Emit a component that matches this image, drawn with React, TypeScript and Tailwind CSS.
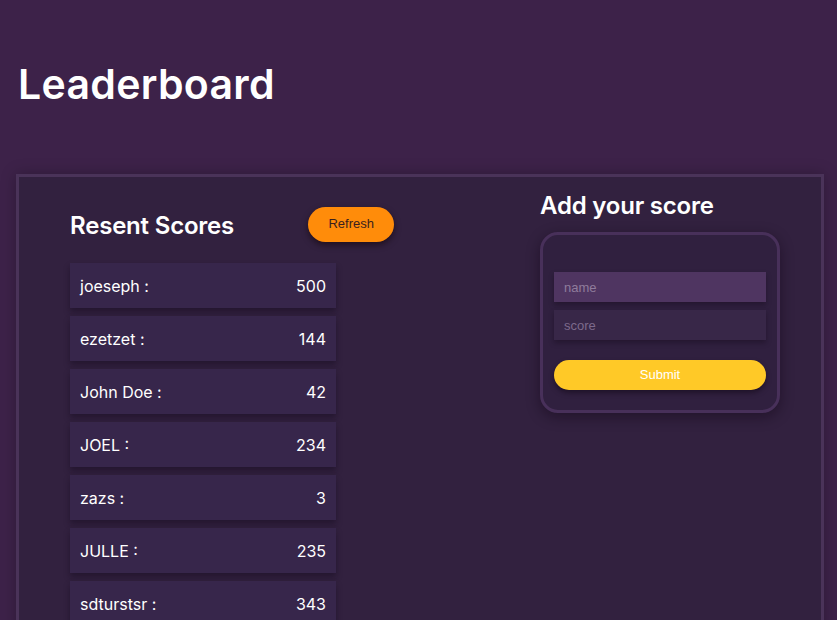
import React from "react";

const SCORES = [
  { name: "joeseph", score: 500 },
  { name: "ezetzet", score: 144 },
  { name: "John Doe", score: 42 },
  { name: "JOEL", score: 234 },
  { name: "zazs", score: 3 },
  { name: "JULLE", score: 235 },
  { name: "sdturstsr", score: 343 },
  { name: "abc", score: 12 },
];

const poppins = { fontFamily: "Inter, 'Noto Sans', sans-serif" };
const arial = { fontFamily: "'Liberation Sans', Arial, sans-serif" };

export default function App() {
  return (
    <div className="min-h-screen bg-[#3d2249] overflow-hidden" style={poppins}>
      <header className="px-[18px] pt-[58px] pb-[64px]">
        <h1 className="text-[41px] leading-[52px] font-semibold text-white tracking-[0.3px]">Leaderboard</h1>
      </header>

      <main className="ml-4 mr-[13px] border-[3px] border-[#4a3359] bg-[#32213f] shadow-[0_0_14px_rgba(0,0,0,0.25)] flex pl-[51px] pr-[41px] pt-[27px] pb-10">
        {/* Recent scores */}
        <section className="w-[324px]">
          <div className="flex items-center justify-between mb-[19px]">
            <h2 className="text-[24px] font-semibold text-white tracking-[-0.2px] mt-1">Resent Scores</h2>
            <button
              className="bg-[#ff8c0a] text-[#3a1f1f] text-[13px] px-[20px] h-[35px] rounded-full shadow-[0_3px_6px_rgba(20,5,10,0.6)]"
              style={arial}
            >
              Refresh
            </button>
          </div>
          <ul className="w-[266px] flex flex-col gap-2">
            {SCORES.map((s) => (
              <li
                key={s.name}
                className="h-[45px] bg-[#37264b] flex items-center justify-between px-[10px] text-white text-[16px] shadow-[0_4px_6px_rgba(20,8,28,0.45)]"
              >
                <span>{s.name} :</span>
                <span>{s.score}</span>
              </li>
            ))}
          </ul>
        </section>

        {/* Add score */}
        <section className="ml-auto w-[240px]">
          <h2 className="text-[24px] font-semibold text-white tracking-[-0.2px] leading-[30px] -mt-[13px] mb-[11px]">Add your score</h2>
          <form className="rounded-[18px] border-[3px] border-[#48305a] bg-[#30203f] shadow-[0_4px_14px_rgba(15,5,20,0.45)] px-[11px] pt-[37px] pb-[20px] flex flex-col">
            <input
              placeholder="name"
              className="h-[30px] bg-[#4f3561] px-[10px] text-[13px] text-white placeholder-[#8f7c9c] outline-none shadow-[0_3px_5px_rgba(15,5,20,0.35)]"
              style={arial}
            />
            <input
              placeholder="score"
              className="mt-2 h-[30px] bg-[#382748] px-[10px] text-[13px] text-white placeholder-[#7d6a8c] outline-none shadow-[0_3px_5px_rgba(15,5,20,0.35)]"
              style={arial}
            />
            <button
              type="button"
              className="mt-5 h-[30px] rounded-full bg-[#ffc927] text-white text-[13px] shadow-[0_3px_5px_rgba(15,5,20,0.5)]"
              style={arial}
            >
              Submit
            </button>
          </form>
        </section>
      </main>
    </div>
  );
}
